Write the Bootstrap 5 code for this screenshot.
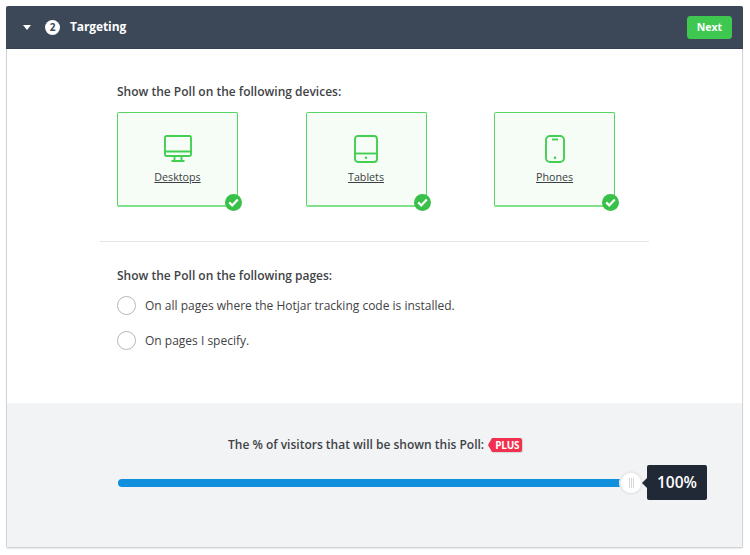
<!DOCTYPE html>
<html lang="en">
<head>
<meta charset="utf-8">
<title>Targeting</title>
<link rel="stylesheet" href="https://cdn.jsdelivr.net/npm/bootstrap@5.3.0/dist/css/bootstrap.min.css">
<style>
html,body{background:#fff;height:555px;overflow:hidden}
body{font-family:"Open Sans","Liberation Sans",sans-serif;color:#3c4043;padding:6px 7px 0 6px}
.panel-box{width:737px;height:542px;border:1px solid #cfd4da;border-top:0;box-shadow:0 1px 1px rgba(60,70,85,.12);display:flex;flex-direction:column;border-radius:2px}
.panel-head{height:43px;margin:0 -1px;background:#3c4858;border-bottom:1px solid #354050;color:#fff;padding:0 11px 0 17px;border-radius:2px 2px 0 0}
.caret-down{width:0;height:0;border-left:4.5px solid transparent;border-right:4.5px solid transparent;border-top:5px solid #fff;margin-right:14px}
.step-num{width:15px;height:15px;border-radius:50%;background:#fff;color:#3c4858;font-size:10px;font-weight:700;line-height:15px;text-align:center;margin-right:10px}
.head-title{font-size:12px;font-weight:700;letter-spacing:-.1px}
.next-btn{--bs-btn-bg:#3fc84f;--bs-btn-border-color:#3fc84f;--bs-btn-hover-bg:#3fc84f;--bs-btn-color:#fff;--bs-btn-hover-color:#fff;font-size:10.5px;font-weight:700;width:45px;height:23px;padding:0;line-height:21px;border-radius:3px}
.body-area{flex:1 1 auto;padding:0 93px 0 110px;min-height:0}
.sect-label{font-size:12px;font-weight:600;line-height:16px;color:#404346}
.first-label{margin-top:35px}
.device-row{margin-top:12px;width:498px}
.device-tile{position:relative;width:121px;height:95px;border:1px solid #58d564;border-bottom:2px solid #82e08c;border-radius:2px;background:#f6fdf6;text-align:center;padding-top:22px}
.device-tile svg{display:block;margin:0 auto;fill:none;stroke:#43cf51;stroke-width:1.9}
.device-name{display:inline-block;font-size:10.7px;line-height:15px;color:#3c4043;text-decoration:underline;margin-top:1px}
.tick{position:absolute;right:-5px;bottom:-6px;width:17px;height:17px;border-radius:50%;background:#38c048;display:flex;align-items:center;justify-content:center}
.device-tile .tick svg{stroke:#fff;stroke-width:2.2}
.split-line{height:1px;background:#e3e5e6;margin:34px 0 0 -17px;width:549px}
.second-label{margin-top:26px}
.radio-row{font-size:12px;color:#3f4245;line-height:18px;height:19px}
.radio-row+.radio-row{margin-top:16px}
.radio-ring{width:19px;height:19px;border-radius:50%;border:1.5px solid #b5b8bb;background:#fff;margin-right:9px;flex:none}
.radio-first{margin-top:12px}
.foot-area{height:144px;background:#f2f3f5;padding-top:34px;flex:none}
.foot-title{font-size:12px;font-weight:600;color:#404346;line-height:16px;margin-left:221px}
.plus-tag{position:relative;display:inline-block;background:#f0304e;color:#fff;font-size:10px;letter-spacing:-.2px;font-weight:700;line-height:14px;height:14px;padding:0 3px 0 3px;margin-left:8px;margin-top:-1px;border-radius:0 2px 2px 0;box-shadow:1px 1px 1px rgba(0,0,0,.12)}
.plus-tag::before{content:"";position:absolute;left:-4px;top:0;border-top:7px solid transparent;border-bottom:7px solid transparent;border-right:4px solid #f0304e}
.slider-row{position:relative;margin:26px 0 0 111px;width:512px;height:8px;background:#0f8fdc;border-radius:4px}
.slider-knob{position:absolute;right:-13px;top:-8.5px;width:24px;height:24px;border-radius:50%;background:#fff;border:2px solid #e9eaec;display:flex;align-items:center;justify-content:center;gap:1px}
.slider-knob span{width:1px;height:10px;background:#d4d6d9}
.value-tip{position:absolute;left:529px;top:-14px;width:60px;height:35px;background:#212936;color:#fff;font-size:15.5px;font-weight:600;line-height:35px;text-align:center;border-radius:2px}
.value-tip::before{content:"";position:absolute;left:-5px;top:13px;border-top:5px solid transparent;border-bottom:5px solid transparent;border-right:5px solid #212936}
</style>
</head>
<body>
<div class="panel-box">
  <div class="panel-head d-flex align-items-center">
    <span class="caret-down"></span>
    <span class="step-num">2</span>
    <span class="head-title">Targeting</span>
    <button type="button" class="btn next-btn ms-auto">Next</button>
  </div>
  <div class="body-area">
    <div class="sect-label first-label">Show the Poll on the following devices:</div>
    <div class="device-row d-flex justify-content-between">
      <div class="device-tile">
        <svg width="28" height="28" viewBox="0 0 28 28"><rect x="1" y="1" width="26" height="20" rx="1.5"/><path d="M1 16.5h26M10.5 21v4.5M17.5 21v4.5M7.5 26h13"/></svg>
        <span class="device-name">Desktops</span>
        <span class="tick"><svg width="11" height="9" viewBox="0 0 11 9"><path d="M1.2 4.4l3 3 5.6-6"/></svg></span>
      </div>
      <div class="device-tile">
        <svg width="24" height="28" viewBox="0 0 24 28"><rect x="1" y="1" width="22" height="26" rx="3"/><path d="M1 18.5h22"/><circle cx="12" cy="22.8" r="1.2" fill="#43cf51" stroke="none"/></svg>
        <span class="device-name">Tablets</span>
        <span class="tick"><svg width="11" height="9" viewBox="0 0 11 9"><path d="M1.2 4.4l3 3 5.6-6"/></svg></span>
      </div>
      <div class="device-tile">
        <svg width="20" height="28" viewBox="0 0 20 28"><rect x="1" y="1" width="18" height="26" rx="4"/><path d="M7 4.5h6"/><circle cx="10" cy="22.8" r="1.3" fill="#43cf51" stroke="none"/></svg>
        <span class="device-name">Phones</span>
        <span class="tick"><svg width="11" height="9" viewBox="0 0 11 9"><path d="M1.2 4.4l3 3 5.6-6"/></svg></span>
      </div>
    </div>
    <div class="split-line"></div>
    <div class="sect-label second-label">Show the Poll on the following pages:</div>
    <div class="radio-row radio-first d-flex align-items-center"><span class="radio-ring"></span><span>On all pages where the Hotjar tracking code is installed.</span></div>
    <div class="radio-row d-flex align-items-center"><span class="radio-ring"></span><span>On pages I specify.</span></div>
  </div>
  <div class="foot-area">
    <div class="foot-title d-flex align-items-center">The % of visitors that will be shown this Poll: <span class="plus-tag">PLUS</span></div>
    <div class="slider-row">
      <div class="slider-knob"><span></span><span></span><span></span></div>
      <div class="value-tip">100%</div>
    </div>
  </div>
</div>
</body>
</html>
